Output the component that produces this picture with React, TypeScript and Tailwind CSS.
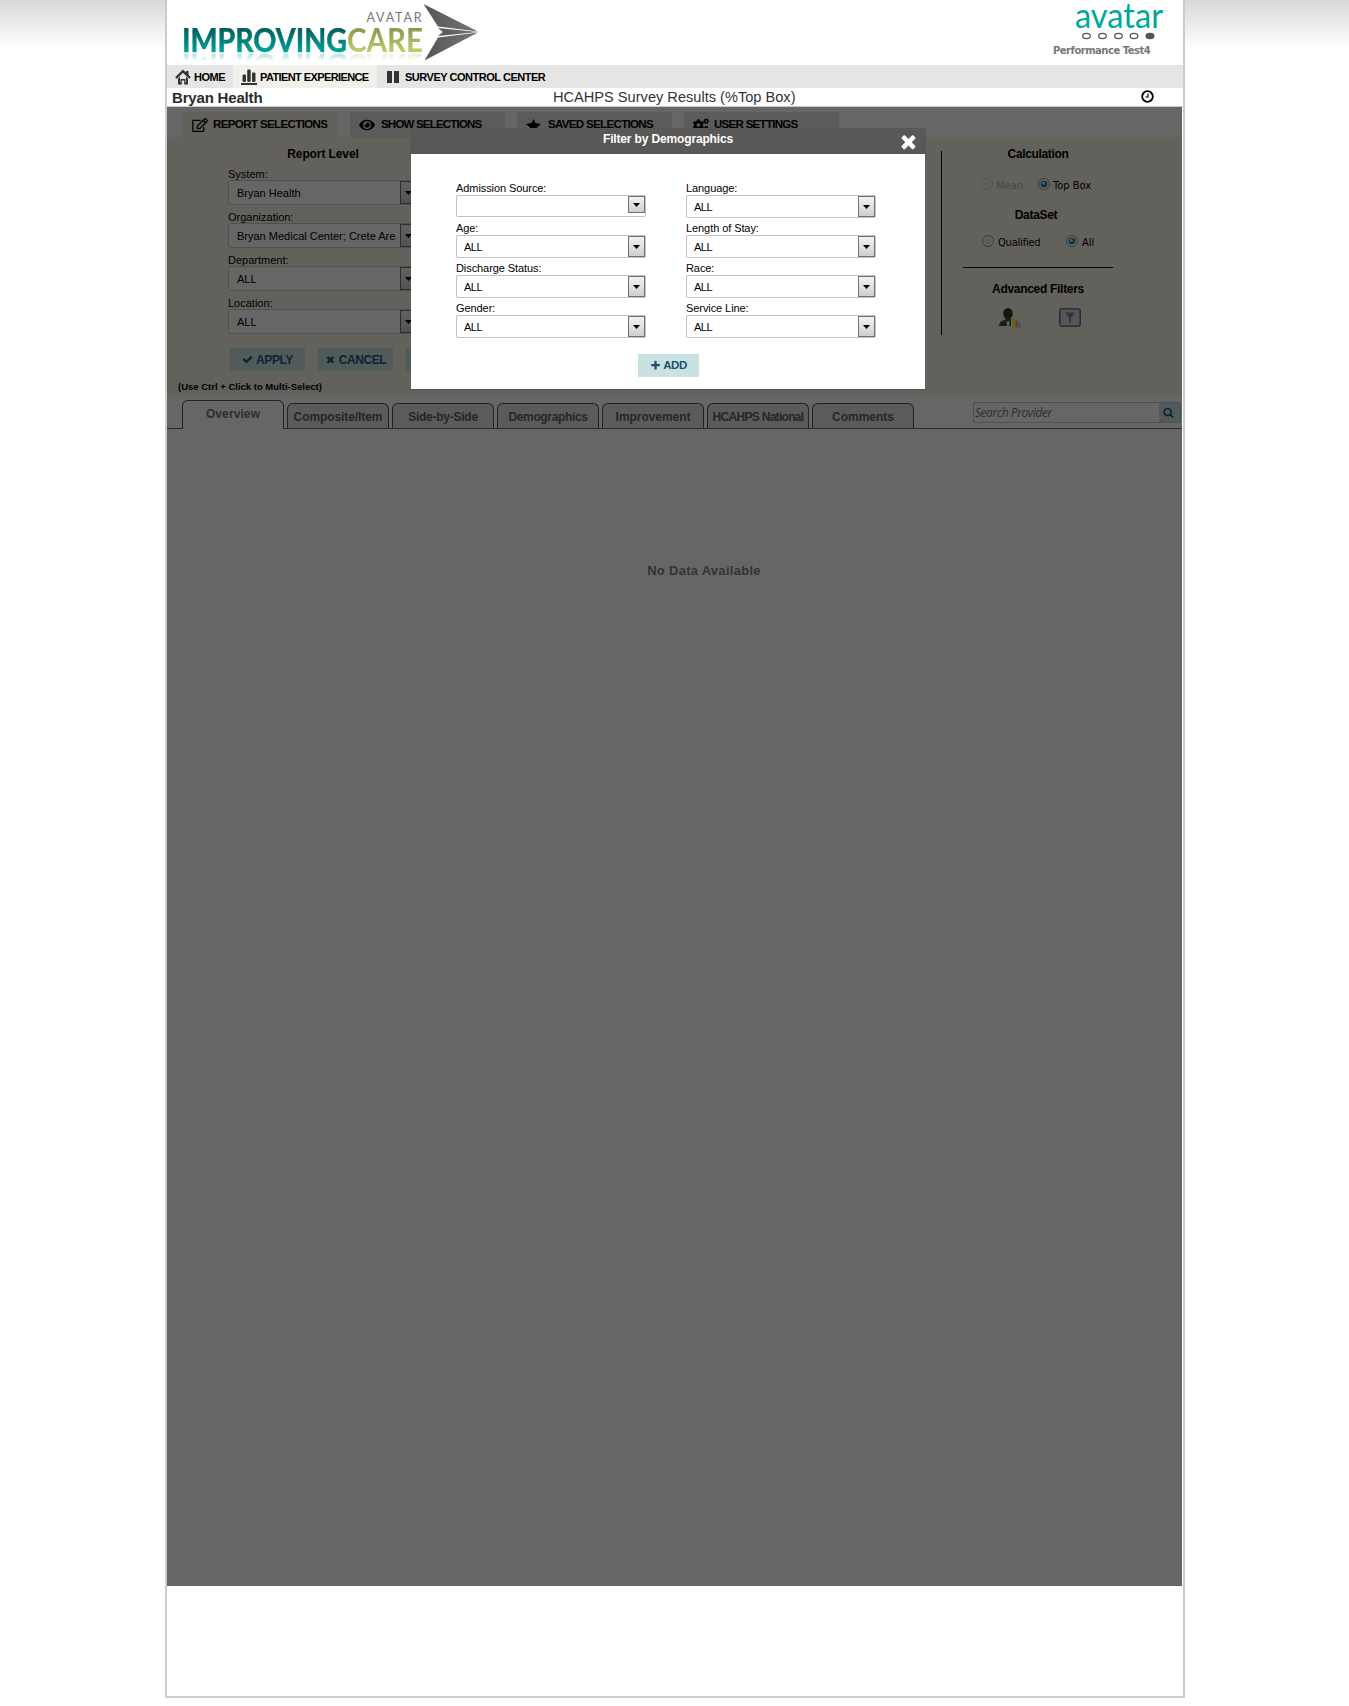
import React from 'react';
import { FaRegEdit, FaEye, FaCogs } from 'react-icons/fa';

const TIMES =
  'M1490 1322q0 40-28 68l-136 136q-28 28-68 28t-68-28l-294-294-294 294q-28 28-68 28t-68-28l-136-136q-28-28-28-68t28-68l294-294-294-294q-28-28-28-68t28-68l136-136q28-28 68-28t68 28l294 294 294-294q28-28 68-28t68 28l136 136q28 28 28 68t-28 68l-294 294 294 294q28 28 28 68z';
const CHECK =
  'M1671 566q0 40-28 68l-724 724-136 136q-28 28-68 28t-68-28l-136-136-362-362q-28-28-28-68t28-68l136-136q28-28 68-28t68 28l294 295 656-657q28-28 68-28t68 28l136 136q28 28 28 68z';
const PLUS =
  'M1600 736v192q0 40-28 68t-68 28h-416v416q0 40-28 68t-68 28h-192q-40 0-68-28t-28-68v-416h-416q-40 0-68-28t-28-68v-192q0-40 28-68t68-28h416v-416q0-40 28-68t68-28h192q40 0 68 28t28 68v416h416q40 0 68 28t28 68z';
const SEARCH =
  'M1216 832q0-185-131.5-316.5t-316.5-131.5-316.5 131.5-131.5 316.5 131.5 316.5 316.5 131.5 316.5-131.5 131.5-316.5zm512 832q0 52-38 90t-90 38q-54 0-90-38l-343-342q-179 124-399 124-143 0-273.5-55.5t-225-150-150-225-55.5-273.5 55.5-273.5 150-225 225-150 273.5-55.5 273.5 55.5 225 150 150 225 55.5 273.5q0 220-124 399l343 343q37 37 37 90z';

function Glyph({ d, className }: { d: string; className: string }) {
  return (
    <svg viewBox="0 0 1792 1792" className={className} fill="currentColor">
      <path d={d} />
    </svg>
  );
}

function ImprovingCareLogo() {
  return (
    <div className="grid h-[65px] w-[320px]">
      <svg width="320" height="65" viewBox="167 0 320 65" className="col-start-1 row-start-1 block">
        <defs>
          <linearGradient id="steel" x1="0" y1="0" x2="1" y2="0">
            <stop offset="0" stopColor="#555" />
            <stop offset="1" stopColor="#777" />
          </linearGradient>
        </defs>
        <text x="366.500" y="22" fontFamily="Lato" fontSize="12.500" fill="#777" textLength="55">AVATAR</text>
        <path d="M423.500 4L478 31.500L438 26.500Z" fill="url(#steel)" />
        <path d="M438 28L478 32L438 36L443 32Z" fill="url(#steel)" />
        <path d="M438 37.500L478 32.500L424.500 60.500Z" fill="url(#steel)" />
      </svg>
      <svg
        width="320"
        height="25"
        viewBox="167 28 320 25"
        className="col-start-1 row-start-1 mt-[28px] block [-webkit-box-reflect:below_0px_linear-gradient(transparent_68%,rgba(0,0,0,0.35))]"
      >
        <defs>
          <linearGradient id="teal" x1="0" y1="29" x2="0" y2="52" gradientUnits="userSpaceOnUse">
            <stop offset="0" stopColor="#045f5c" />
            <stop offset="1" stopColor="#00a398" />
          </linearGradient>
          <linearGradient id="olive" x1="0" y1="29" x2="0" y2="52" gradientUnits="userSpaceOnUse">
            <stop offset="0" stopColor="#8a9a50" />
            <stop offset="1" stopColor="#bccf6c" />
          </linearGradient>
        </defs>
        <g fontFamily="Lato" fontSize="32" fontWeight="700">
          <text x="182" y="52" fill="url(#teal)" stroke="url(#teal)" strokeWidth="0.500" textLength="165" lengthAdjust="spacingAndGlyphs">IMPROVING</text>
          <text x="347" y="52" fill="url(#olive)" textLength="76" lengthAdjust="spacingAndGlyphs">CARE</text>
        </g>
      </svg>
    </div>
  );
}

function AvatarLogo() {
  return (
    <svg width="90" height="42" viewBox="1075 0 90 42" className="block">
      <text x="1075" y="28" fontFamily="Lato" fontSize="35" fill="#00a79d" textLength="88" lengthAdjust="spacingAndGlyphs">avatar</text>
      {[1086.5, 1102.5, 1118.5, 1134].map((x) => (
        <ellipse key={x} cx={x} cy="36" rx="3.800" ry="2.600" fill="none" stroke="#555" strokeWidth="1.300" />
      ))}
      <ellipse cx="1150" cy="36" rx="4.500" ry="3.200" fill="#555" />
    </svg>
  );
}

function HomeIcon() {
  return (
    <svg width="16" height="16" viewBox="0 0 16 16" className="shrink-0">
      <path d="M1 9L8 2.200L15 9" fill="none" stroke="#333" strokeWidth="2.400" />
      <path d="M11 2h2.500v5L11 5z" fill="#333" />
      <path d="M3 9.500V15.500H6.800V11.500H9.200V15.500H13V9.500L11 7.800V13.500H10.500V10H5.500V13.500H5V7.800Z" fill="#333" />
    </svg>
  );
}

function BarsIcon() {
  return (
    <svg width="16" height="16" viewBox="0 0 16 16" fill="#333" className="shrink-0">
      <rect x="1.500" y="5.500" width="3.500" height="7.500" rx="1.200" />
      <rect x="6.200" y="0.500" width="3.500" height="12.500" rx="1.200" />
      <rect x="11" y="3.500" width="3.500" height="9.500" rx="1.200" />
      <rect x="0" y="14" width="16" height="2" />
    </svg>
  );
}

function Field({ label, value = 'ALL', short = false }: { label: string; value?: string; short?: boolean }) {
  return (
    <div className="h-10 w-[190px]">
      <div className="h-[13px] text-[11px] leading-[13px] tracking-[-0.080px] text-black">{label}</div>
      <div
        className={
          short
            ? 'flex h-[22px] items-start justify-between rounded-[2px] border border-[#c3c3c3] bg-white'
            : 'flex h-[23px] items-start justify-between rounded-[2px] border border-[#c3c3c3] bg-white'
        }
      >
        <span className="pl-[7px] text-[11px] leading-[23px] tracking-[-0.500px] text-black">{value}</span>
        <span
          className={
            short
              ? 'flex h-[17px] w-[17px] items-center justify-center border border-[#707070] bg-linear-to-b from-[#f2f2f2] to-[#cfcfcf]'
              : 'flex h-[21px] w-[17px] items-center justify-center border border-[#707070] bg-linear-to-b from-[#f2f2f2] to-[#cfcfcf]'
          }
        >
          <svg width="7" height="4" viewBox="0 0 7 4"><path d="M0 0H7L3.500 4Z" /></svg>
        </span>
      </div>
    </div>
  );
}

function DimField({ label, value }: { label: string; value: string }) {
  return (
    <div className="h-[43px] w-[190px]">
      <div className="h-[13px] text-[11px] leading-[15px]">{label}</div>
      <div className="flex h-[25px] justify-between overflow-hidden rounded-[3px] border border-[#50504f] bg-[#666]">
        <span className="ml-2 w-[159px] overflow-hidden text-[11px] leading-[24px] whitespace-nowrap">{value}</span>
        <span className="flex w-[17px] items-center justify-center border border-[#2d2d2d] bg-linear-to-b from-[#616161] to-[#525252]">
          <svg width="7" height="4" viewBox="0 0 7 4"><path d="M0 0H7L3.500 4Z" /></svg>
        </span>
      </div>
    </div>
  );
}

function Radio({ on = false, faint = false }: { on?: boolean; faint?: boolean }) {
  return (
    <svg width="12" height="12" viewBox="0 0 12 12" className="shrink-0">
      <circle cx="6" cy="6" r="5.500" fill="#62625f" stroke={faint ? '#515150' : '#3a3c3e'} />
      <circle cx="6" cy="6" r="4" fill="#5c5c5c" stroke="#6a6a6a" strokeWidth="0.600" />
      {on && <circle cx="6" cy="6" r="3.300" fill="#12303c" />}
      {on && <circle cx="5.400" cy="5.200" r="1.500" fill="#35667a" />}
    </svg>
  );
}

const topTab = 'flex h-[25px] w-[155px] items-center pl-[9px] pt-px text-[11.500px] font-bold whitespace-nowrap';
const dimButton = 'flex h-[23px] w-[75px] items-center justify-center gap-[3px] bg-[#505b5a] text-[12px] font-bold tracking-[-0.400px] text-[#0e2233]';
const lowerTabs = [
  { name: 'Composite/Item', spacing: 'tracking-[-0.080px]' },
  { name: 'Side-by-Side', spacing: 'tracking-[-0.250px]' },
  { name: 'Demographics', spacing: 'tracking-[-0.350px]' },
  { name: 'Improvement', spacing: 'tracking-[-0.050px]' },
  { name: 'HCAHPS National', spacing: 'tracking-[-0.700px]' },
  { name: 'Comments', spacing: 'tracking-normal' },
];

function Modal() {
  return (
    <div className="absolute top-[21px] left-[243px] w-[516px]">
      <div className="relative h-[26px] bg-[#595856] text-center text-[12px] leading-[22px] font-bold tracking-[-0.150px] text-white">
        Filter by Demographics
        <Glyph d={TIMES} className="absolute top-[3px] right-[7px] h-[21px] w-[21px]" />
      </div>
      <div className="mx-px h-[236px] border-b border-[#555] bg-white pt-[28px]">
        <div className="flex gap-[40px] pl-[45px]">
          <div>
            <Field label="Admission Source:" value="" short />
            <Field label="Age:" />
            <Field label="Discharge Status:" />
            <Field label="Gender:" />
          </div>
          <div>
            <Field label="Language:" />
            <Field label="Length of Stay:" />
            <Field label="Race:" />
            <Field label="Service Line:" />
          </div>
        </div>
        <button className="mt-[12px] ml-[227px] flex h-[23px] w-[61px] items-center justify-center gap-[2px] bg-[#c8e2e2] text-[11.500px] font-bold tracking-[-0.500px] text-[#23506e]">
          <Glyph d={PLUS} className="h-[11px] w-[11px]" />
          ADD
        </button>
      </div>
    </div>
  );
}

export default function App() {
  return (
    <div className="h-[1706px] bg-white bg-linear-to-b from-[#d9d9d9] to-white to-[50px] font-['Liberation_Sans',Arial,sans-serif] text-black">
      <div className="ml-[165px] h-[1698px] w-[1020px] border-x-2 border-b-2 border-[#ccc] bg-white">
        <header className="flex h-[65px] justify-between">
          <ImprovingCareLogo />
          <div className="flex w-[131px] flex-col">
            <div className="ml-[23px]"><AvatarLogo /></div>
            <div className="pt-[2px] pl-px font-['DejaVu_Sans',Verdana,sans-serif] text-[10px] leading-[14px] font-bold tracking-[-0.500px] whitespace-nowrap text-[#777]">
              Performance Test4
            </div>
          </div>
        </header>

        <nav className="flex h-[23px] bg-[#e5e5e5] text-[11px] font-bold whitespace-nowrap">
          <a className="flex w-[66px] items-center gap-[3px] pt-px pl-2 tracking-[-0.500px]"><HomeIcon />HOME</a>
          <a className="flex w-[144px] items-center gap-[3px] bg-[#f1f0eb] pt-px pl-2 tracking-[-0.600px]"><BarsIcon />PATIENT EXPERIENCE</a>
          <a className="flex items-center gap-[6px] pt-px pl-[10px] tracking-[-0.480px]">
            <svg width="12" height="12" viewBox="0 0 12 12" fill="#333"><path d="M0 0h5v12H0zM7 0h5v12H7z" /></svg>
            SURVEY CONTROL CENTER
          </a>
        </nav>

        <div className="flex h-[19px] items-center border-b border-[#ccc]">
          <div className="w-[386px] pl-[5px] text-[15px] leading-[19px] font-bold tracking-[-0.180px] text-[#2b2b2b]">Bryan Health</div>
          <div className="w-[588px] pt-px text-[14.600px] leading-[19px] text-[#333]">HCAHPS Survey Results (%Top Box)</div>
          <svg width="14" height="14" viewBox="0 0 14 14" fill="none" stroke="#000">
            <circle cx="6.500" cy="6.500" r="5.300" strokeWidth="1.800" />
            <path d="M7 3.500V7H4.500" strokeWidth="1.200" />
          </svg>
        </div>

        <main className="relative h-[1479px] w-[1015px] bg-[#666]">
          <div className="flex h-[30px] gap-3 pt-[5px] pl-4">
            <div className={`${topTab} bg-[#63615c] tracking-[-0.600px]`}><FaRegEdit className="mr-[5px] h-[14px] w-[16px]" />REPORT SELECTIONS</div>
            <div className={`${topTab} bg-[#5b5b5b] tracking-[-0.800px]`}><FaEye className="mr-[6px] h-[14px] w-[16px]" />SHOW SELECTIONS</div>
            <div className={`${topTab} bg-[#5b5b5b] tracking-[-0.650px]`}>
              <svg width="15" height="13" viewBox="0 0 15 13" className="mr-[7px]"><path d="M7.500 0L9.500 4L15 5L11 8.500L12 13L7.500 11L3 13L4 8.500L0 5L5.500 4Z" /></svg>
              SAVED SELECTIONS
            </div>
            <div className={`${topTab} bg-[#5b5b5b] tracking-[-0.700px]`}><FaCogs className="mr-[5px] h-[16px] w-[16px]" />USER SETTINGS</div>
          </div>

          <section className="flex h-[258px] justify-between bg-[#63615c]">
            <div className="pt-[10px] pl-[11px]">
              <h2 className="ml-[50px] w-[190px] text-center text-[12px] leading-[14px] font-bold tracking-[-0.100px]">Report Level</h2>
              <div className="ml-[50px] pt-[6px]">
                <DimField label="System:" value="Bryan Health" />
                <DimField label="Organization:" value="Bryan Medical Center; Crete Area" />
                <DimField label="Department:" value="ALL" />
                <DimField label="Location:" value="ALL" />
              </div>
              <div className="mt-[9px] ml-[52px] flex gap-[13px]">
                <div className={dimButton}><Glyph d={CHECK} className="h-[11px] w-[11px]" />APPLY</div>
                <div className={dimButton}><Glyph d={TIMES} className="h-[11px] w-[11px]" />CANCEL</div>
                <div className={dimButton} />
              </div>
              <p className="mt-[9px] text-[9.500px] leading-[14px] font-bold">(Use Ctrl + Click to Multi-Select)</p>
            </div>
            <div className="mt-[14px] h-[184px] w-[241px] border-l border-black font-['DejaVu_Sans_Condensed','DejaVu_Sans',sans-serif] text-[11px]">
              <div className="ml-[21px] w-[150px]">
                <h2 className="-mt-1 text-center font-['Liberation_Sans'] text-[12px] leading-[14px] font-bold tracking-[-0.350px]">Calculation</h2>
                <div className="mt-[13px] flex h-[20px] items-center pl-[18px]">
                  <Radio faint /><span className="ml-[3px] w-[42px] pt-[4px] text-[#474643]">Mean</span>
                  <Radio on /><span className="ml-[3px] pt-[4px] whitespace-nowrap">Top Box</span>
                </div>
                <h2 className="mt-[14px] pr-[4px] text-center font-['Liberation_Sans'] text-[12px] leading-[14px] font-bold tracking-[-0.300px]">DataSet</h2>
                <div className="mt-[9px] flex h-[20px] items-center pl-[19px]">
                  <Radio /><span className="ml-[4px] w-[68px] pt-[4px] tracking-[-0.200px]">Qualified</span>
                  <Radio on /><span className="ml-[4px] pt-[4px]">All</span>
                </div>
                <div className="mt-[16px] h-px bg-black" />
                <h2 className="mt-[14px] text-center font-['Liberation_Sans'] text-[12px] leading-[14px] font-bold tracking-[-0.300px]">Advanced Filters</h2>
                <div className="mt-[12px] flex gap-[38px] pl-[36px]">
                  <svg width="22" height="20" viewBox="0 0 22 20">
                    <ellipse cx="9" cy="5.500" rx="4.700" ry="5.500" fill="#151515" />
                    <path d="M0 18Q0 13 6 12L7 9H11L13 12Q15 13 15 18Z" fill="#1c1c1c" />
                    <path d="M7.500 12.500L9 14L10.500 12.500L10 18H8Z" fill="#666" />
                    <path d="M12.500 9.500h3.500v10h-3.500z" fill="#56662f" stroke="#5f7030" />
                    <path d="M16.500 12.500h2.500v7h-2.500z" fill="#6b3f1f" stroke="#73492a" />
                    <path d="M20 15h1.500v4.500H20z" fill="#265468" stroke="#2e6076" />
                  </svg>
                  <svg width="22" height="19" viewBox="0 0 22 19">
                    <rect x="0.800" y="0.800" width="20.400" height="17.400" rx="2" fill="#53575a" stroke="#222629" strokeWidth="1.300" />
                    <path d="M6 4.500H16L12 9.500V15L10 13.500V9.500Z" fill="#303437" />
                  </svg>
                </div>
              </div>
            </div>
          </section>

          <div className="flex h-[34px] items-end border-b border-[#2b2b2b] pl-[15px]">
            <div className="-mb-px h-[29px] w-[102px] rounded-t-[6px] border border-b-0 border-[#222] bg-[#666] pt-[6px] text-center text-[12px] leading-[15px] font-bold tracking-[0.100px] text-[#2d2d2d]">
              Overview
            </div>
            {lowerTabs.map((t) => (
              <div key={t.name} className={`ml-[3px] h-[25px] w-[102px] rounded-t-[6px] border border-b-0 border-[#222] bg-[#5b5b5b] pt-[6px] text-center text-[12px] leading-[15px] font-bold whitespace-nowrap text-[#262626] ${t.spacing}`}>
                {t.name}
              </div>
            ))}
            <div className="mb-[5px] ml-[59px] flex h-[21px] w-[208px] rounded-[2px] border border-[#505050]">
              <span className="w-[185px] pl-px font-['Open_Sans','Noto_Sans',sans-serif] text-[12px] leading-[20px] tracking-[-0.450px] text-[#2f2f2f] italic">Search Provider</span>
              <span className="flex flex-1 items-center justify-center bg-[#505b5a] pr-[2px] text-[#0e2233]"><Glyph d={SEARCH} className="h-[11px] w-[11px]" /></span>
            </div>
          </div>

          <p className="pt-[133px] pl-[59px] text-center text-[13px] leading-[18px] font-bold tracking-[0.280px] text-[#333]">No Data Available</p>

          <Modal />
        </main>
      </div>
    </div>
  );
}
